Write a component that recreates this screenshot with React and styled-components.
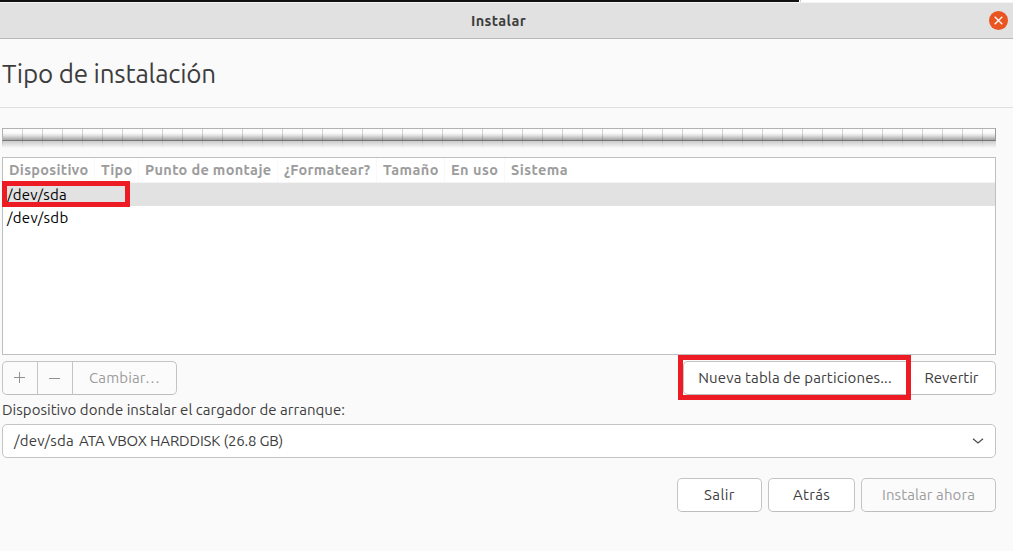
import React, { useLayoutEffect, useRef, useState } from "react";
import styled, { createGlobalStyle } from "styled-components";

const GlobalStyle = createGlobalStyle`
  * { box-sizing: border-box; }
  body {
    margin: 0;
    background: #fafafa;
    color: #3d3d3d;
    font: 15px/20px Ubuntu, "Noto Sans", sans-serif;
    overflow: hidden;
  }
`;

const Window = styled.div`
  width: 1013px;
  height: 551px;
  display: flex;
  flex-direction: column;
  background: #fafafa;
`;

const Desktop = styled.div`
  flex: none;
  height: 3px;
  background: linear-gradient(90deg, #111 799px, #fff 799px, #fff 800px, #ccc 800px, #ccc 801px, #fff 801px) 0 0 / 100% 2px no-repeat #f4f4f4;
`;

const TitleBar = styled.header`
  flex: none;
  height: 36px;
  display: grid;
  grid-template-columns: 1fr auto 1fr;
  align-items: center;
  padding: 0 5px 0 17px;
  background: #e1e1e1;
  border-bottom: 1px solid #b8b8b8;
  font-weight: 700;
  font-size: 14.5px;
`;

const WindowTitle = styled.h1`
  grid-column: 2;
  margin: 0;
  font: inherit;
  transform: translateX(-14px);
`;

const CloseButton = styled.button`
  justify-self: end;
  width: 19px;
  height: 19px;
  margin-top: -1px;
  padding: 0;
  border: 0;
  border-radius: 50%;
  background: #e95420;
  display: grid;
  place-items: center;
`;

const Heading = styled.h2`
  flex: none;
  height: 69px;
  margin: 0;
  padding: 1px 2px 0;
  display: flex;
  align-items: center;
  border-bottom: 1px solid #dfdfdf;
  font-size: 26px;
  line-height: 34px;
  font-weight: 400;
`;

const Content = styled.main`
  width: 996px;
  padding: 20px 0 0 2px;
  display: flex;
  flex-direction: column;
`;

const DiskBar = styled.div`
  height: 13px;
  border: 1px solid #b2b2b2;
  border-right-color: #999;
  border-bottom-color: #777;
  background:
    repeating-linear-gradient(90deg, transparent 0 19px, rgba(0, 0, 0, 0.16) 19px 20px),
    linear-gradient(#fcfcfc 36%, #dedede 62%, #a4a4a4);
`;

const DiskReflection = styled.div`
  height: 8px;
  margin-bottom: 8px;
  background:
    linear-gradient(rgba(250, 250, 250, 0), #fafafa 90%),
    repeating-linear-gradient(90deg, #b4b4b4 0 1px, #cbcbcb 1px 20px);
`;

const Table = styled.section`
  height: 198px;
  border: 1px solid #bfbfbf;
  background: #fff;
`;

const TableHead = styled.div`
  height: 25px;
  display: flex;
  border-bottom: 1px solid #f5f5f5;
  color: #9c9c9c;
  font-weight: 700;
  font-size: 14.5px;
`;

const HeadCell = styled.div`
  width: ${(p) => p.$width}px;
  padding: 2px 0 0 6px;
  border-right: ${(p) => (p.$last ? "0" : "1px solid #f9f9f9")};
  white-space: nowrap;
`;

const Row = styled.div`
  position: relative;
  height: 23px;
  padding: 2px 4px 0;
  color: #000;
  background: ${(p) => (p.$selected ? "#e2e2e2" : "#fff")};
`;

const Marker = styled.span`
  position: absolute;
  z-index: 1;
  left: ${(p) => p.$left}px;
  top: ${(p) => p.$top}px;
  width: ${(p) => p.$width}px;
  height: ${(p) => p.$height}px;
  border: 5px solid #ed1c24;
  pointer-events: none;
`;

const Toolbar = styled.div`
  display: flex;
  justify-content: space-between;
  margin-top: 6px;
`;

const ButtonGroup = styled.div`
  position: relative;
  display: flex;
`;

const Button = styled.button`
  width: ${(p) => p.$width}px;
  height: 34px;
  padding: 0 ${(p) => p.$nudge || 0}px 1px 0;
  display: flex;
  align-items: center;
  justify-content: center;
  border: 1px solid #c4c4c4;
  border-bottom-color: #bdbdbd;
  border-radius: 5px;
  background: #fff;
  color: #3d3d3d;
  font: inherit;
  white-space: nowrap;

  &:disabled {
    background: #fbfbfb;
    color: #9d9d9d;
  }

  ${ButtonGroup} > &:not(:first-child) {
    border-top-left-radius: 0;
    border-bottom-left-radius: 0;
    margin-left: -1px;
  }
  ${ButtonGroup} > &:not(:last-of-type) {
    border-top-right-radius: 0;
    border-bottom-right-radius: 0;
  }
`;

const FieldLabel = styled.div`
  height: 29px;
  padding-top: 5px;
  white-space: nowrap;
`;

const Select = styled.div`
  height: 34px;
  padding: 0 11px 1px;
  display: flex;
  align-items: center;
  border: 1px solid #c4c4c4;
  border-radius: 5px;
  background: #fff;
`;

const DeviceName = styled.span`
  margin-right: 5px;
`;

const Chevron = styled.svg`
  margin-left: auto;
`;

const Footer = styled.footer`
  display: flex;
  justify-content: flex-end;
  gap: 6px;
  margin-top: 20px;
`;

const Tracked = styled.span`
  display: inline-block;
  width: ${(p) => p.$width}px;
  white-space: nowrap;
`;

// Spreads the letters so that the text fills the given width in any font.
function Text({ width, children }) {
  const ref = useRef(null);
  const [spacing, setSpacing] = useState(0);
  useLayoutEffect(() => {
    const range = document.createRange();
    range.selectNodeContents(ref.current);
    const natural = range.getBoundingClientRect().width;
    setSpacing((width - natural) / children.length);
  }, [width, children]);
  return (
    <Tracked ref={ref} $width={width} style={{ letterSpacing: `${spacing}px` }}>
      {children}
    </Tracked>
  );
}

const columns = [
  ["Dispositivo", 92, 79.5],
  ["Tipo", 44, 31.5],
  ["Punto de montaje", 139, 126.5],
  ["¿Formatear?", 99, 86.5],
  ["Tamaño", 68, 56],
  ["En uso", 60, 47.5],
  ["Sistema", 80, 57],
];

export default function App() {
  return (
    <Window>
      <GlobalStyle />
      <Desktop />
      <TitleBar>
        <WindowTitle><Text width={55}>Instalar</Text></WindowTitle>
        <CloseButton aria-label="Cerrar">
          <svg width="9" height="9" viewBox="0 0 9 9" stroke="#fff" strokeWidth="1.3">
            <path d="M.7.7l7.6 7.6M8.3.7L.7 8.3" />
          </svg>
        </CloseButton>
      </TitleBar>
      <Heading><Text width={214}>Tipo de instalación</Text></Heading>
      <Content>
        <DiskBar />
        <DiskReflection />
        <Table>
          <TableHead>
            {columns.map(([name, cell, text], i) => (
              <HeadCell key={name} $width={cell} $last={i === columns.length - 1}>
                <Text width={text}>{name}</Text>
              </HeadCell>
            ))}
          </TableHead>
          <Row $selected>
            <Text width={60}>/dev/sda</Text>
            <Marker $left={-1} $top={-2} $width={128} $height={26} />
          </Row>
          <Row><Text width={61.5}>/dev/sdb</Text></Row>
        </Table>
        <Toolbar>
          <ButtonGroup>
            <Button $width={36} $nudge={1} disabled aria-label="Añadir">
              <svg width="11" height="11" viewBox="0 0 11 11" stroke="#929292">
                <path d="M5.5 0v11M0 5.5h11" />
              </svg>
            </Button>
            <Button $width={36} $nudge={1} disabled aria-label="Quitar">
              <svg width="11" height="11" viewBox="0 0 11 11" stroke="#929292">
                <path d="M0 6.5h11" />
              </svg>
            </Button>
            <Button $width={105} disabled><Text width={71}>Cambiar…</Text></Button>
          </ButtonGroup>
          <ButtonGroup>
            <Button $width={225} $nudge={1}><Text width={193.5}>Nueva tabla de particiones...</Text></Button>
            <Button $width={89}><Text width={54}>Revertir</Text></Button>
            <Marker $left={-5} $top={-6} $width={233} $height={45} />
          </ButtonGroup>
        </Toolbar>
        <FieldLabel><Text width={343}>Dispositivo donde instalar el cargador de arranque:</Text></FieldLabel>
        <Select>
          <DeviceName><Text width={60}>/dev/sda</Text></DeviceName>
          <Text width={204}>ATA VBOX HARDDISK (26.8 GB)</Text>
          <Chevron width="12" height="8" viewBox="0 0 12 8" fill="none" stroke="#4a4a4a" strokeWidth="1.2">
            <path d="M1 1.8l5 4.2 5-4.2" />
          </Chevron>
        </Select>
        <Footer>
          <Button $width={85}><Text width={31}>Salir</Text></Button>
          <Button $width={87}><Text width={37}>Atrás</Text></Button>
          <Button $width={135} disabled><Text width={93}>Instalar ahora</Text></Button>
        </Footer>
      </Content>
    </Window>
  );
}
